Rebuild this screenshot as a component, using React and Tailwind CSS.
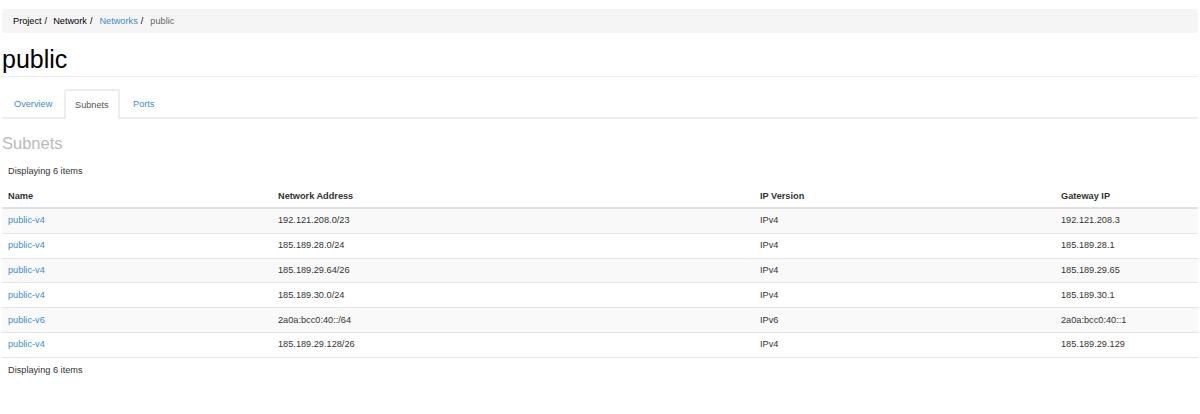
const rows = [
  ["public-v4", "192.121.208.0/23", "IPv4", "192.121.208.3"],
  ["public-v4", "185.189.28.0/24", "IPv4", "185.189.28.1"],
  ["public-v4", "185.189.29.64/26", "IPv4", "185.189.29.65"],
  ["public-v4", "185.189.30.0/24", "IPv4", "185.189.30.1"],
  ["public-v6", "2a0a:bcc0:40::/64", "IPv6", "2a0a:bcc0:40::1"],
  ["public-v4", "185.189.29.128/26", "IPv4", "185.189.29.129"],
];
const grid = "grid grid-cols-[270px_482px_301px_1fr] px-[6px]";
export default function App() {
  return (
    <div className="h-[414px] bg-white px-[2px] pt-[9px] text-[9.2px] leading-[13px] text-[#333] font-['Helvetica_Neue','Liberation_Sans',Arial,sans-serif] overflow-hidden">
      <div className="h-[24px] bg-[#f5f5f5] rounded-[3px] flex items-center pl-[11px] text-black">
        <span>Project</span><span className="ml-[3px] mr-[6px]">/</span>
        <span>Network</span><span className="ml-[3px] mr-[7px]">/</span>
        <span className="text-[#428bca]">Networks</span><span className="ml-[3px] mr-[7px]">/</span>
        <span className="text-[#666]">public</span>
      </div>
      <h1 className="mt-[12px] h-[31px] text-[25px] leading-[29px] text-black">public</h1>
      <div className="border-t border-[#eee] pt-[12px]">
        <div className="flex h-[30px] border-b-2 border-[#eee] text-[#428bca]">
          <div className="w-[62px] pl-[12px] pt-[9px]">Overview</div>
          <div className="w-[56px] pl-[9px] pt-[8px] h-[30px] bg-white border-2 border-[#eee] border-b-0 rounded-t-[3px] text-[#555]">Subnets</div>
          <div className="pl-[13px] pt-[9px]">Ports</div>
        </div>
      </div>
      <h3 className="mt-[13px] h-[26px] text-[16.5px] leading-[22px] text-[#bbb]">Subnets</h3>
      <div className="pl-[6px] mt-[6px] h-[16px] leading-[13px] pt-[1px]">Displaying 6 items</div>
      <div className={`${grid} h-[29px] items-end font-bold border-b-2 border-[#e0e0e0] pb-[4px]`}>
        <div>Name</div><div>Network Address</div><div>IP Version</div><div>Gateway IP</div>
      </div>
      {rows.map((r, i) => (
        <div key={i} className={`${grid} h-[24.8px] items-center border-b border-[#e6e6e6] ${i % 2 === 0 ? "bg-[#f9f9f9]" : "bg-white"}`}>
          <div className="text-[#428bca]">{r[0]}</div><div>{r[1]}</div><div>{r[2]}</div><div>{r[3]}</div>
        </div>
      ))}
      <div className="pl-[6px] mt-[6px]">Displaying 6 items</div>
    </div>
  );
}
